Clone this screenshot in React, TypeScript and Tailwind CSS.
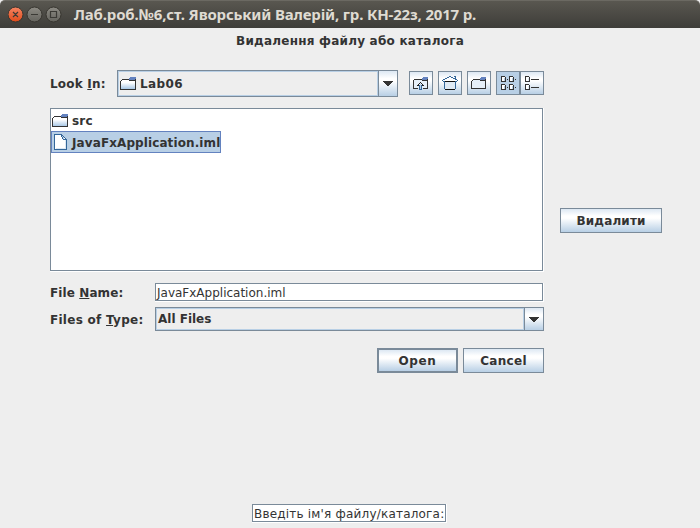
import type { ReactNode } from "react";

const METAL =
  "bg-[linear-gradient(180deg,#dde8f3_0%,#ffffff_30%,#ffffff_40%,#b8cfe5_100%)]";

function FolderIcon() {
  return (
    <svg width="16" height="16" viewBox="0 0 16 16" shapeRendering="crispEdges" className="shrink-0">
      <defs>
        <linearGradient id="folder" x1="0" y1="0" x2="0" y2="1">
          <stop offset="0" stopColor="#fff" />
          <stop offset="0.3" stopColor="#fff" />
          <stop offset="1" stopColor="#a9c8e6" />
        </linearGradient>
      </defs>
      <path fill="url(#folder)" d="M1 4h14v9H1z" />
      <path fill="#333" d="M0 5h1v9H0zM1 4h1v1H1zM2 3h7v1H2zM9 4h6v1H9zM15 3h1v11h-1zM1 13h15v1H1z" />
      <path fill="#6382bf" d="M10 1h6v2h-6zM9 2h1v1H9zM9 3h6v1H9z" />
    </svg>
  );
}

function NewFolderIcon() {
  return (
    <svg width="16" height="16" viewBox="0 0 16 16" shapeRendering="crispEdges">
      <path fill="#e6eff8" d="M1 5h13v8H1z" />
      <path fill="#333" d="M0 6h1v8H0zM1 5h1v1H1zM2 4h7v1H2zM9 5h5v1H9zM14 4h1v10h-1zM1 13h14v1H1z" />
      <path fill="#6382bf" d="M10 2h5v1h-5zM9 3h6v1H9zM9 4h5v1H9z" />
    </svg>
  );
}

function FileIcon() {
  return (
    <svg width="16" height="16" viewBox="0 0 16 16" shapeRendering="crispEdges" className="shrink-0">
      <path fill="#fff" d="M2 1h7l4 4v10H2z" />
      <path fill="#dce8f4" d="M12 6h1v9h-1zM3 14h9v1H3z" />
      <path fill="#336699" d="M1 0h8v1H1zM1 1h1v14H1zM1 15h13v1H1zM13 5h1v10h-1zM9 1h1v1H9zM10 2h1v1h-1zM11 3h1v1h-1zM12 4h1v1h-1zM8 1h1v2H8zM9 3h1v2H9zM10 5h3v1h-3z" />
      <path fill="#b8cfe5" d="M9 2h1v1H9zM10 3h1v2h-1z" />
    </svg>
  );
}

function UpFolderIcon() {
  return (
    <svg width="16" height="16" viewBox="0 0 16 16" shapeRendering="crispEdges">
      <path fill="#e6eff8" d="M1 5h13v8H1z" />
      <path fill="#333" d="M0 5h1v9H0zM1 4h8v1H1zM9 5h5v1H9zM14 4h1v10h-1zM1 13h4v1H1zM10 13h5v1h-5z" />
      <path fill="#6382bf" d="M10 2h5v1h-5zM9 3h6v1H9zM9 4h5v1H9z" />
      <path fill="#b8cfe5" d="M7 9h1v6H7z" />
      <path fill="#222" d="M7 7h1v1H7zM6 8h1v1H6zM8 8h1v1H8zM5 9h1v1H5zM9 9h1v1H9zM4 10h2v1H4zM9 10h2v1H9z" />
      <path fill="#336699" d="M6 10h1v5H6zM8 10h1v5H8zM7 14h1v1H7z" />
    </svg>
  );
}

function HomeIcon() {
  return (
    <svg width="16" height="16" viewBox="0 0 16 16" shapeRendering="crispEdges">
      <path fill="#fff" d="M7 2h2v1H7zM5 3h6v1H5zM3 4h10v1H3zM2 5h12v1H2z" />
      <path fill="#dfeaf5" d="M3 7h10v7H3z" />
      <path fill="#336699" d="M7 1h2v1H7zM5 2h2v1H5zM9 2h2v1H9zM3 3h2v1H3zM11 3h2v1h-2zM1 4h2v1H1zM13 4h2v1h-2zM0 5h1v1H0zM15 5h1v1h-1zM12 1h2v1h-2zM13 2h1v2h-1zM1 6h2v1H1zM13 6h2v1h-2zM2 7h1v7H2zM13 7h1v7h-1z" />
      <path fill="#111" d="M3 6h10v1H3zM3 14h10v1H3z" />
    </svg>
  );
}

function ListIcon() {
  return (
    <svg width="16" height="16" viewBox="0 0 16 16" shapeRendering="crispEdges">
      <path fill="#fff" stroke="#333" d="M1.5 1.5h4v5h-4zM1.5 9.5h4v5h-4zM9.5 1.5h4v5h-4zM9.5 9.5h4v5h-4z" />
      <path fill="#333" d="M7 4h1v1H7zM15 4h1v1h-1zM7 12h1v1H7zM15 12h1v1h-1z" />
      <path fill="#b8cfe5" d="M5 1h1v1H5zM13 1h1v1h-1zM5 9h1v1H5zM13 9h1v1h-1zM4 3h1v3H4zM12 3h1v3h-1zM4 11h1v3H4zM12 11h1v3h-1z" />
    </svg>
  );
}

function DetailsIcon() {
  return (
    <svg width="16" height="16" viewBox="0 0 16 16" shapeRendering="crispEdges">
      <path fill="#fff" stroke="#333" d="M1.5 1.5h4v5h-4zM1.5 9.5h4v5h-4z" />
      <path fill="#333" d="M7 4h8v1H7zM7 12h8v1H7z" />
      <path fill="#dde8f3" d="M5 1h1v1H5zM5 9h1v1H5zM4 3h1v3H4zM4 11h1v3H4z" />
    </svg>
  );
}

function Arrow() {
  return (
    <svg width="10" height="5" viewBox="0 0 10 5" shapeRendering="crispEdges">
      <path fill="#333" d="M0 0h10v1H0zM1 1h8v1H1zM2 2h6v1H2zM3 3h4v1H3zM4 4h2v1H4z" />
    </svg>
  );
}

function ToolButton({ children }: { children: ReactNode }) {
  return (
    <button className={`flex size-6 items-center justify-center border border-[#7a8a99] ${METAL}`}>
      {children}
    </button>
  );
}

function Combo({ className, children }: { className: string; children: ReactNode }) {
  return (
    <div className={`flex border border-[#7a8a99] ${className}`}>
      <div className="flex flex-1 items-center border border-[#b8cfe5]">{children}</div>
      <div className={`flex w-[19px] items-center justify-center border-l border-[#7a8a99] ${METAL}`}>
        <Arrow />
      </div>
    </div>
  );
}

export default function App() {
  return (
    <div className="flex h-[528px] w-[700px] flex-col overflow-hidden bg-[#eeeeee] font-['DejaVu_Sans',sans-serif] text-[12px] leading-[14px] font-bold whitespace-pre text-[#333]">
      <header className="flex h-7 shrink-0 items-center rounded-t-[5px] border-t border-[#6b6962] bg-linear-to-b from-[#595750] to-[#3e3d39] pl-2">
        <svg width="56" height="18" viewBox="0 0 56 18">
          <defs>
            <linearGradient id="close" x1="0" y1="0" x2="0" y2="1">
              <stop offset="0" stopColor="#f58563" />
              <stop offset="1" stopColor="#df4b1a" />
            </linearGradient>
            <linearGradient id="ctrl" x1="0" y1="0" x2="0" y2="1">
              <stop offset="0" stopColor="#8d8b84" />
              <stop offset="1" stopColor="#64635d" />
            </linearGradient>
          </defs>
          <g stroke="#37352f">
            <circle cx="7.5" cy="8.5" r="7.5" fill="url(#close)" />
            <circle cx="26.5" cy="8.5" r="7.5" fill="url(#ctrl)" />
            <circle cx="45.5" cy="8.5" r="7.5" fill="url(#ctrl)" />
          </g>
          <path d="M5 6l5 5M10 6l-5 5M23 8.5h7M42.5 5.5h6v6h-6z" fill="none" stroke="#3b3a35" strokeWidth="1.2" />
        </svg>
        <h1 className="-mt-[2px] pl-[10px] font-['Noto_Sans',sans-serif] text-[15px] leading-5 font-bold tracking-[-0.17px] text-[#dfdbd2]">
          Лаб.роб.№6,ст. Яворський Валерій, гр. КН-22з, 2017 р.
        </h1>
      </header>

      <div className="flex h-[26px] items-center justify-center tracking-[0.23px]">Видалення файлу або каталога</div>

      <main className="flex pt-4 pl-[50px]">
        <section className="flex w-[494px] flex-col">
          <div className="flex h-[27px] items-center">
            <div className="w-[67px] tracking-[0.2px]">Look <u>I</u>n:</div>
            <Combo className="h-[27px] w-[281px]">
              <span className="flex items-center gap-1 pt-px pl-px tracking-[0.4px]"><FolderIcon />Lab06</span>
            </Combo>
            <div className="ml-[11px] flex gap-[5px] pb-px">
              <ToolButton><UpFolderIcon /></ToolButton>
              <ToolButton><HomeIcon /></ToolButton>
              <ToolButton><NewFolderIcon /></ToolButton>
              <div className="flex">
                <button className="flex size-6 items-center justify-center border border-[#7a8a99] bg-[#b8cfe5]"><ListIcon /></button>
                <ToolButton><DetailsIcon /></ToolButton>
              </div>
            </div>
          </div>

          <div className="mt-[11px] h-[164px] border-r border-b border-white">
            <div className="flex h-[163px] flex-col items-start border border-[#7a8a99] bg-white">
              <div className="flex h-[22px] items-center gap-1 pt-[2px] pl-px tracking-[0.2px]"><FolderIcon />src</div>
              <div className="flex h-[22px] w-[170px] items-center gap-[3px] border border-[#6382bf] bg-[#b8cfe5] pl-px">
                <FileIcon /><span className="pt-[2px] tracking-[0.1px]">JavaFxApplication.iml</span>
              </div>
            </div>
          </div>

          <div className="mt-[11px] flex items-center">
            <div className="w-[105px] tracking-[0.1px]">File <u>N</u>ame:</div>
            <div className="flex-1 border-r border-b border-white">
              <div className="flex h-[18px] items-center border border-[#7a8a99] bg-white pt-[2px] pl-px font-normal">JavaFxApplication.iml</div>
            </div>
          </div>
          <div className="mt-[5px] flex items-center">
            <div className="w-[105px] pt-px tracking-[0.28px]">Files of <u>T</u>ype:</div>
            <Combo className="h-6 flex-1"><span className="pl-px">All Files</span></Combo>
          </div>

          <div className="mt-[17px] flex justify-end gap-[5px]">
            <button className={`h-[25px] w-[81px] border-2 border-[#7a8a99] tracking-[0.6px] ${METAL}`}>Open</button>
            <button className={`h-[25px] w-[81px] border border-[#7a8a99] tracking-[0.3px] ${METAL}`}>Cancel</button>
          </div>
        </section>
        <button className={`mt-[138px] ml-4 h-[25px] w-[102px] border border-[#7a8a99] tracking-[0.15px] ${METAL}`}>Видалити</button>
      </main>

      <footer className="mt-auto flex justify-center pr-px pb-[5px]">
        <div className="border-r border-b border-white">
          <div className="flex h-[18px] w-[194px] items-center border border-[#7a8a99] bg-white pt-[2px] pl-px font-normal tracking-[0.2px]">Введіть ім'я файлу/каталога:</div>
        </div>
      </footer>
    </div>
  );
}
